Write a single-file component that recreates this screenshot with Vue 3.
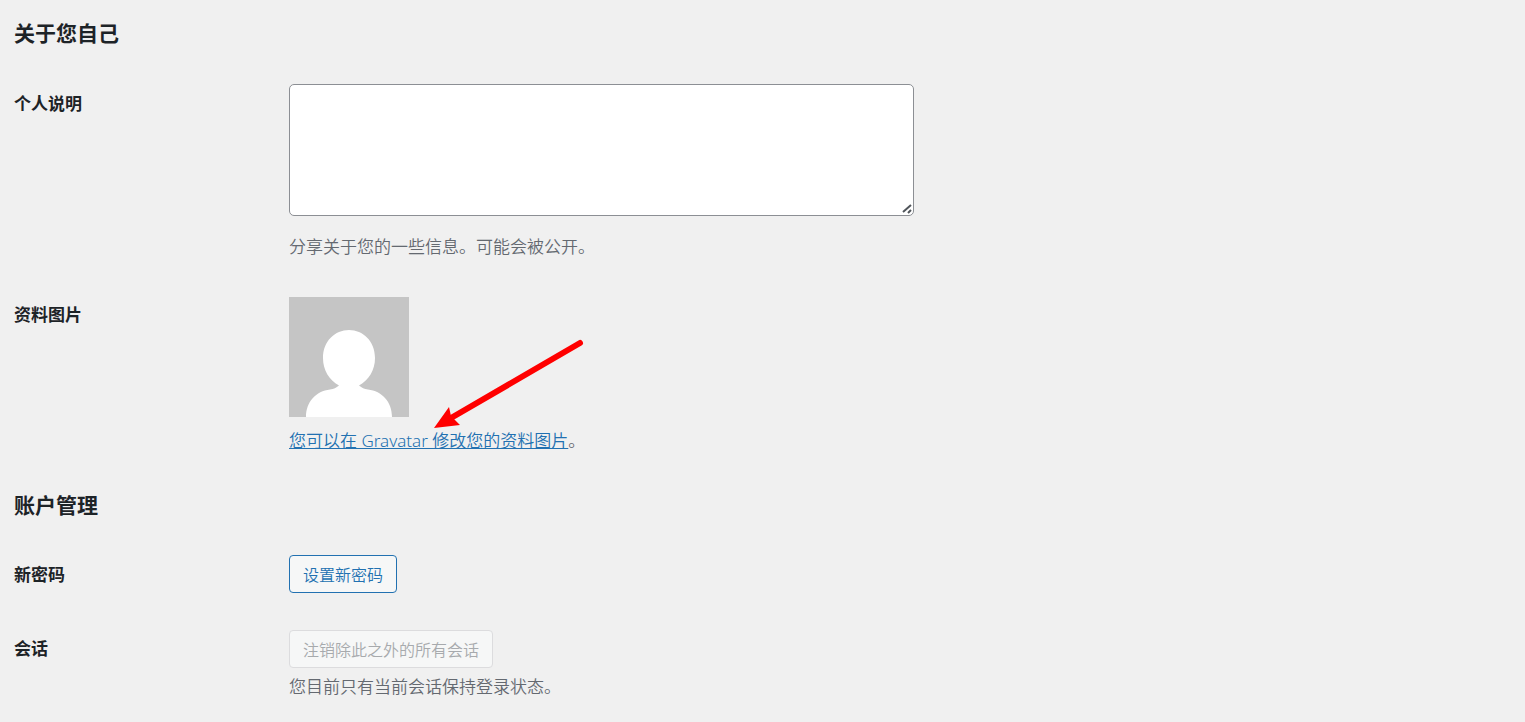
<script setup>
import { ref } from 'vue'

const bio = ref('')
</script>

<template>
  <main class="profile">
    <h2>关于您自己</h2>
    <div class="row about">
      <label class="name" for="bio">个人说明</label>
      <div class="field">
        <div class="bio-box">
          <textarea id="bio" v-model="bio" rows="5"></textarea>
          <svg class="grip" viewBox="0 0 12 12" aria-hidden="true">
            <path d="M2 9L10 2M7 10L10 7" fill="none" stroke="#50555a" stroke-width="2" />
          </svg>
        </div>
        <p class="hint bio-hint">分享关于您的一些信息。可能会被公开。</p>
      </div>
    </div>
    <div class="row picture">
      <div class="name">资料图片</div>
      <div class="field">
        <div class="avatar-wrap">
          <svg class="avatar" viewBox="0 0 120 120" role="img" aria-label="头像">
            <rect width="120" height="120" fill="#c5c5c5" />
            <path fill="#fff" d="M60 33C74 33 86 44 86 61C86 73 80 83 70 88.500C73 91 75 92 79 92.500C93 94 103 105 103 120H17C17 105 27 94 41 92.500C45 92 47 91 50 88.500C40 83 34 73 34 61C34 44 46 33 60 33Z" />
          </svg>
          <svg class="arrow" viewBox="0 0 152 92" aria-hidden="true">
            <path d="M146 6L17 81" fill="none" stroke="#f00" stroke-width="6" stroke-linecap="round" />
            <path d="M0 91L15 70L17 79L26 88Z" fill="#f00" />
          </svg>
        </div>
        <p class="hint link-hint"><a href="#">您可以在 Gravatar 修改您的资料图片</a>。</p>
      </div>
    </div>
    <h2>账户管理</h2>
    <div class="row password">
      <div class="name">新密码</div>
      <div class="field"><button type="button">设置新密码</button></div>
    </div>
    <div class="row sessions">
      <div class="name">会话</div>
      <div class="field">
        <button type="button" disabled>注销除此之外的所有会话</button>
        <p class="hint session-hint">您目前只有当前会话保持登录状态。</p>
      </div>
    </div>
  </main>
</template>

<style>
body {
  background: #f0f0f0;
}
</style>

<style scoped>
.profile {
  padding: 19px 14px 0;
  color: #1d2327;
  font-family: "Noto Sans", "Noto Sans CJK SC", sans-serif;
  font-size: 17px;
  font-weight: 350;
  line-height: 28px;
}
h2 {
  margin: 0;
  font-size: 21px;
  line-height: 28px;
  font-weight: 600;
}
.row {
  display: grid;
  grid-template-columns: 275px minmax(0, 1fr);
}
.name {
  font-weight: 600;
  line-height: 24px;
}
.about {
  padding-top: 37px;
}
.about .name {
  padding-top: 8px;
}
.bio-box {
  position: relative;
  width: fit-content;
  max-width: 100%;
}
textarea {
  display: block;
  box-sizing: border-box;
  width: 625px;
  max-width: 100%;
  height: 132px;
  padding: 3px 8px;
  border: 1px solid #8c8f94;
  border-radius: 5px;
  background: #fff;
  font: inherit;
  resize: both;
}
textarea::-webkit-resizer {
  background: transparent;
}
.grip {
  position: absolute;
  right: 1px;
  bottom: 1px;
  width: 12px;
  height: 12px;
  pointer-events: none;
}
.hint {
  margin: 0;
  color: #646970;
}
.bio-hint {
  margin-top: 17px;
}
.picture {
  padding: 36px 0;
}
.picture .name {
  padding-top: 6px;
}
.avatar-wrap {
  position: relative;
  width: 120px;
  height: 120px;
}
.avatar {
  display: block;
  width: 120px;
  height: 120px;
}
.arrow {
  position: absolute;
  left: 145px;
  top: 40px;
  width: 152px;
  height: 92px;
  pointer-events: none;
}
.link-hint {
  margin-top: 10px;
}
a {
  color: #2271b1;
}
button {
  display: block;
  height: 38px;
  padding: 1px 13px 0;
  border: 1px solid #2271b1;
  border-radius: 4px;
  background: #f6f7f7;
  color: #2271b1;
  font: inherit;
  font-size: 16px;
}
button:disabled {
  border-color: #dcdcde;
  color: #a7aaad;
}
.password {
  padding-top: 36px;
}
.password .name {
  padding-top: 8px;
}
.sessions {
  padding-top: 37px;
}
.sessions .name {
  padding-top: 7px;
}
.session-hint {
  margin-top: 5px;
}
</style>
